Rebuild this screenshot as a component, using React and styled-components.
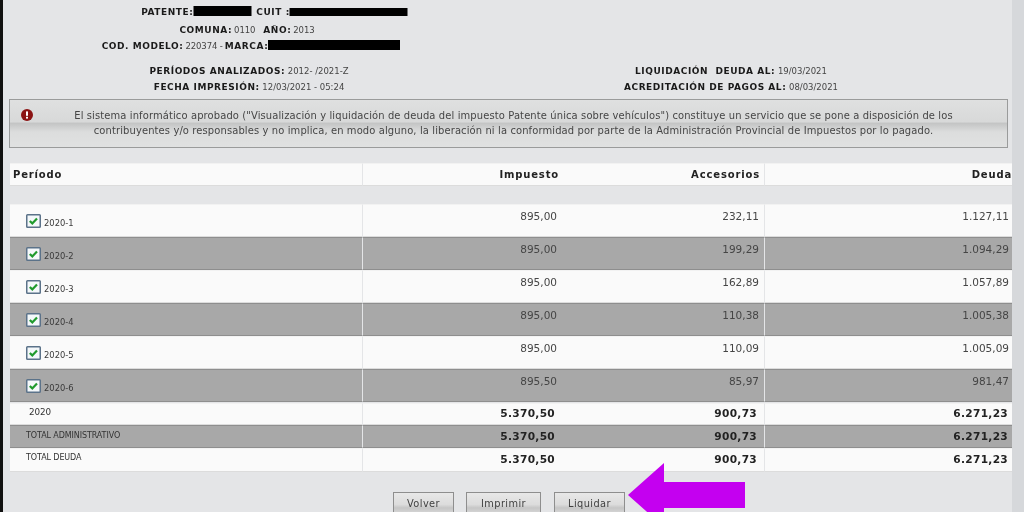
import React from "react";
import styled, { createGlobalStyle } from "styled-components";

const Global = createGlobalStyle`
  html, body { margin: 0; padding: 0; width: 1024px; height: 512px; overflow: hidden; background: #e4e5e7; }
  * { box-sizing: border-box; }
`;

const Page = styled.div`
  position: relative;
  width: 1024px;
  height: 512px;
  overflow: hidden;
  display: flex;
  background: #e4e5e7;
  font-family: "DejaVu Sans", sans-serif;
  color: #2a2a2a;
`;
const Content = styled.div`
  flex: 1;
  min-width: 0;
  display: flex;
  flex-direction: column;
  filter: blur(0.55px);
  padding-top: 5px;
`;
const LeftEdge = styled.div`
  width: 3px;
  flex: none;
  background: #111;
`;
const ScrollTrack = styled.div`
  width: 12px;
  flex: none;
  background: #d6d8db;
`;
const Main = styled.div`
  flex: 1;
  min-width: 0;
  display: flex;
  flex-direction: column;
  padding-left: 6px;
`;
const Summary = styled.div`
  width: 490px;
  margin-left: 3px;
  display: flex;
  flex-direction: column;
  align-items: center;
`;
const InfoLine = styled.div`
  height: ${(p) => p.$h}px;
  line-height: 14px;
  font-size: 8.5px;
  white-space: nowrap;
  display: flex;
  align-items: flex-start;
  color: #333;
  transform: translateX(${(p) => p.$shift || 0}px);
`;
const Key = styled.b`
  font-weight: 700;
  font-size: 9px;
  letter-spacing: 0.55px;
  color: #1a1a1a;
`;
const Value = styled.span`
  margin-left: 2px;
  margin-right: ${(p) => p.$after || 0}px;
  letter-spacing: -0.1px;
  color: #444;
`;
const Redacted = styled.span`
  display: inline-block;
  width: ${(p) => p.$w}px;
  height: ${(p) => p.$bar}px;
  margin: ${(p) => p.$top}px ${(p) => p.$after || 0}px 0 ${(p) => p.$before || 0}px;
  background: #000;
`;
const Analysis = styled.div`
  display: grid;
  grid-template-columns: 480px 484px;
  margin-top: 10px;
`;
const AnalysisCol = styled.div`
  display: flex;
  flex-direction: column;
  align-items: center;
`;
const AnalysisLine = styled.div`
  height: 16px;
  line-height: 14px;
  font-size: 8.5px;
  white-space: nowrap;
  color: #444;
`;
const Alert = styled.div`
  width: 999px;
  height: 49px;
  margin: 3px 0 0 0;
  border: 1px solid #9a9b9b;
  background: linear-gradient(to bottom, #dfe0e0 0%, #d8d9d9 46%, #c4c5c5 50%, #dcdddd 68%, #e0e1e1 100%);
  display: flex;
  align-items: flex-start;
  padding-top: 8px;
`;
const AlertIcon = styled.svg`
  width: 12px;
  height: 12px;
  margin: 1px 0 0 11px;
  flex: none;
`;
const AlertText = styled.p`
  margin: 0;
  flex: 1;
  padding: 0 37px 0 24px;
  text-align: center;
  font-size: 9.95px;
  letter-spacing: 0.12px;
  line-height: 15px;
  color: #454545;
  white-space: nowrap;
`;
const Table = styled.div`
  width: 1002px;
  margin: 15px 0 0 1px;
  display: flex;
  flex-direction: column;
`;
const Row = styled.div`
  display: grid;
  grid-template-columns: 353px 200px 202px 247px;
  height: ${(p) => p.$h}px;
  margin-top: ${(p) => p.$gap || 0}px;
`;
const Cell = styled.div`
  background: ${(p) => (p.$dark ? "#a8a8a8" : "#fafafa")};
  border-top: 1px solid ${(p) => (p.$dark ? "#8e8e8e" : "#f2f2f2")};
  border-bottom: 1px solid ${(p) => (p.$dark ? "#8e8e8e" : "#dcdcdc")};
  border-right: ${(p) => (p.$divide ? "1px solid #e4e5e7" : "none")};
  display: flex;
  align-items: flex-start;
  justify-content: ${(p) => (p.$left ? "flex-start" : "flex-end")};
  padding: ${(p) => p.$pt || 0}px ${(p) => p.$pr || 0}px 0 ${(p) => p.$pl || 0}px;
  white-space: nowrap;
`;
const HeadText = styled.b`
  font-size: 10px;
  line-height: 12px;
  letter-spacing: 0.85px;
  color: #222;
`;
const Amount = styled.span`
  font-size: 10.5px;
  line-height: 12px;
  color: #454545;
`;
const TotalAmount = styled.b`
  font-size: 10.6px;
  line-height: 12px;
  letter-spacing: 0.3px;
  color: #222;
`;
const Check = styled.svg`
  width: 15px;
  height: 14px;
  flex: none;
`;
const PeriodLabel = styled.span`
  font-size: 8.4px;
  line-height: 10px;
  margin: 4px 0 0 3px;
  color: #3a3a3a;
`;
const TotalLabel = styled.span`
  font-size: ${(p) => p.$size}px;
  line-height: 10px;
  letter-spacing: -0.1px;
  color: #333;
`;
const Actions = styled.div`
  display: flex;
  margin: 20px 0 0 384px;
`;
const Button = styled.button`
  width: ${(p) => p.$w}px;
  height: 26px;
  margin-right: ${(p) => p.$after || 0}px;
  padding: 0 0 4px;
  border: 1px solid #8e8e8e;
  background: linear-gradient(to bottom, #e8e8e8 0%, #dcdcdc 48%, #c6c6c6 62%, #e2e2e2 100%);
  font-family: "DejaVu Sans", sans-serif;
  font-size: 9.8px;
  letter-spacing: 0.4px;
  color: #3f3f3f;
`;
const Arrow = styled.svg`
  position: absolute;
  left: 626px;
  top: 460px;
`;

const rows = [
  ["2020-1", "895,00", "232,11", "1.127,11"],
  ["2020-2", "895,00", "199,29", "1.094,29"],
  ["2020-3", "895,00", "162,89", "1.057,89"],
  ["2020-4", "895,00", "110,38", "1.005,38"],
  ["2020-5", "895,00", "110,09", "1.005,09"],
  ["2020-6", "895,50", "85,97", "981,47"],
];
const totals = [
  { label: "2020", h: 22, labelTop: 3, labelLeft: 19, amountTop: 3, size: 8.8 },
  { label: "TOTAL ADMINISTRATIVO", h: 23, labelTop: 5, labelLeft: 16, amountTop: 4, size: 8 },
  { label: "TOTAL DEUDA", h: 24, labelTop: 4, labelLeft: 16, amountTop: 4, size: 8 },
];

const CheckIcon = () => (
  <Check viewBox="0 0 15 14">
    <rect x="0.75" y="0.75" width="13.5" height="12.5" rx="0.8" fill="#f4f8fa" stroke="#5b7289" strokeWidth="1.5" />
    <path d="M3.8 7 L6.3 9.4 L11 4.4" fill="none" stroke="#1f9a2c" strokeWidth="2.2" />
  </Check>
);

export default function App() {
  return (
    <Page>
      <Global />
      <LeftEdge />
      <Content>
        <Main>
          <Summary>
            <InfoLine $h={18} $shift={17.5}>
              <Key>PATENTE:</Key>
              <Redacted $w={58} $bar={10} $top={1} $after={5} />
              <Key>CUIT :</Key>
              <Redacted $w={118} $bar={8} $top={3} />
            </InfoLine>
            <InfoLine $h={16} $shift={-10}>
              <Key>COMUNA:</Key>
              <Value $after={8}>0110</Value>
              <Key>AÑO:</Key>
              <Value>2013</Value>
            </InfoLine>
            <InfoLine $h={15} $shift={-6}>
              <Key>COD. MODELO:</Key>
              <Value $after={2}>220374 -</Value>
              <Key>MARCA:</Key>
              <Redacted $w={132} $bar={10} $top={1} />
            </InfoLine>
          </Summary>
          <Analysis>
            <AnalysisCol>
              <AnalysisLine><Key>PERÍODOS ANALIZADOS:</Key> 2012- /2021-Z</AnalysisLine>
              <AnalysisLine><Key>FECHA IMPRESIÓN:</Key> 12/03/2021 - 05:24</AnalysisLine>
            </AnalysisCol>
            <AnalysisCol>
              <AnalysisLine><Key>LIQUIDACIÓN&nbsp; DEUDA AL:</Key> 19/03/2021</AnalysisLine>
              <AnalysisLine><Key>ACREDITACIÓN DE PAGOS AL:</Key> 08/03/2021</AnalysisLine>
            </AnalysisCol>
          </Analysis>
          <Alert>
            <AlertIcon viewBox="0 0 12 12">
              <circle cx="6" cy="6" r="6" fill="#8b1414" />
              <rect x="5" y="2.4" width="2" height="4.4" fill="#fff" />
              <rect x="5" y="7.8" width="2" height="1.8" fill="#fff" />
            </AlertIcon>
            <AlertText>
              El sistema informático aprobado ("Visualización y liquidación de deuda del impuesto Patente única sobre vehículos") constituye un servicio que se pone a disposición de los
              <br />
              contribuyentes y/o responsables y no implica, en modo alguno, la liberación ni la conformidad por parte de la Administración Provincial de Impuestos por lo pagado.
            </AlertText>
          </Alert>
          <Table>
            <Row $h={23}>
              <Cell $left $divide $pt={5} $pl={3}><HeadText>Período</HeadText></Cell>
              <Cell $pt={5} $pr={4}><HeadText>Impuesto</HeadText></Cell>
              <Cell $divide $pt={5} $pr={4}><HeadText>Accesorios</HeadText></Cell>
              <Cell $pt={5}><HeadText>Deuda</HeadText></Cell>
            </Row>
            {rows.map(([period, tax, extra, debt], i) => {
              const dark = i % 2 === 1;
              return (
                <Row key={period} $h={33} $gap={i === 0 ? 18 : 0}>
                  <Cell $left $dark={dark} $divide $pt={9} $pl={16}>
                    <CheckIcon />
                    <PeriodLabel>{period}</PeriodLabel>
                  </Cell>
                  <Cell $dark={dark} $pt={5} $pr={6}><Amount>{tax}</Amount></Cell>
                  <Cell $dark={dark} $divide $pt={5} $pr={5}><Amount>{extra}</Amount></Cell>
                  <Cell $dark={dark} $pt={5} $pr={3}><Amount>{debt}</Amount></Cell>
                </Row>
              );
            })}
            {totals.map(({ label, h, labelTop, labelLeft, amountTop, size }, i) => {
              const dark = i === 1;
              return (
                <Row key={label} $h={h} $gap={i === 0 ? 1 : 0}>
                  <Cell $left $dark={dark} $divide $pt={labelTop} $pl={labelLeft}>
                    <TotalLabel $size={size}>{label}</TotalLabel>
                  </Cell>
                  <Cell $dark={dark} $pt={amountTop} $pr={8}><TotalAmount>5.370,50</TotalAmount></Cell>
                  <Cell $dark={dark} $divide $pt={amountTop} $pr={7}><TotalAmount>900,73</TotalAmount></Cell>
                  <Cell $dark={dark} $pt={amountTop} $pr={4}><TotalAmount>6.271,23</TotalAmount></Cell>
                </Row>
              );
            })}
          </Table>
          <Actions>
            <Button $w={61} $after={12}>Volver</Button>
            <Button $w={75} $after={13}>Imprimir</Button>
            <Button $w={71}>Liquidar</Button>
          </Actions>
        </Main>
      </Content>
      <ScrollTrack />
      <Arrow width="122" height="52" viewBox="0 0 122 52">
        <path d="M2 35 L38 3 L38 22 L119 22 L119 48 L38 48 L38 67 Z" fill="#c400f0" />
      </Arrow>
    </Page>
  );
}
